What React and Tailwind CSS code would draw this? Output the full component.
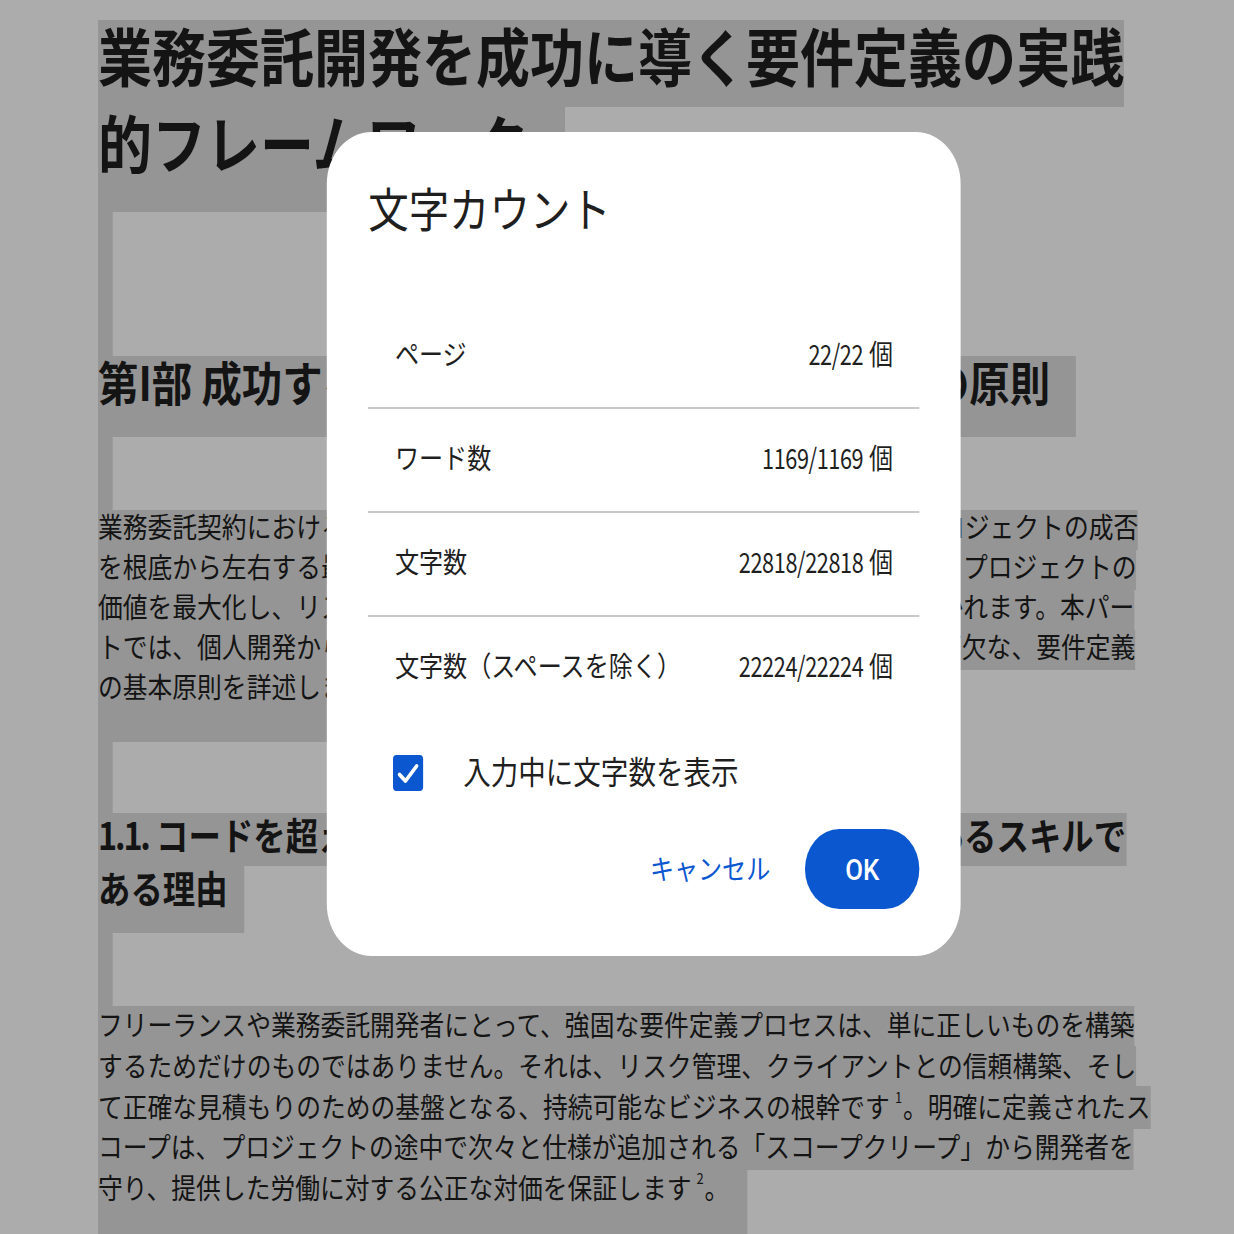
import React from "react";

const rows = [
  { label: "ページ", value: "22/22" },
  { label: "ワード数", value: "1169/1169" },
  { label: "文字数", value: "22818/22818" },
  { label: "文字数（スペースを除く）", value: "22224/22224" },
];

function Strip({ className }) {
  return <div className={"w-[17.4px] bg-[#dddddd] " + className} />;
}

export default function App() {
  return (
    <div className="w-[1234px] h-[1234px] overflow-hidden bg-white">
      <div className="relative w-[1434.9px] h-[1234px] origin-top-left scale-x-[0.86] bg-white text-[#1f1f1f] font-['Noto_Sans_CJK_JP',sans-serif]">
        <main className="pl-[114px] pt-[20px] whitespace-nowrap">
          <h1 className="text-[62.8px] font-bold leading-[68px]">
            <span className="block w-fit h-[87px] bg-[#dddddd]">業務委託開発を成功に導く要件定義の実践</span>
            <span className="block w-fit h-[105px] pr-[42px] bg-[#dddddd]">的フレームワーク</span>
          </h1>
          <Strip className="h-[144px]" />
          <h2 className="w-fit h-[81px] pr-[30px] bg-[#dddddd] text-[47px] font-bold leading-[49px]">
            第I部 成功する業務委託開発のための要件定義の原則
          </h2>
          <Strip className="h-[73px]" />
          <p className="text-[28.8px] leading-[32px]">
            <span className="block w-fit h-[40px] bg-[#dddddd]">業務委託契約における要件定義は、単なる技術仕様の策定作業ではなく、プロジェクトの成否</span>
            <span className="block w-fit h-[40px] bg-[#dddddd]">を根底から左右する最も重要な工程であり、これを適切に実行することによりプロジェクトの</span>
            <span className="block w-fit h-[40px] bg-[#dddddd]">価値を最大化し、リスクを最小限にすることができ、長期的な信頼関係も築かれます。本パー</span>
            <span className="block w-fit h-[40px] bg-[#dddddd]">トでは、個人開発から本格的な受託開発まで、全ての開発者にとって必要不可欠な、要件定義</span>
            <span className="block w-fit h-[72px] pr-[21px] bg-[#dddddd]">の基本原則を詳述します。</span>
          </p>
          <Strip className="h-[71px]" />
          <h3 className="text-[37.7px] font-bold leading-[42px]">
            <span className="block w-fit h-[53px] bg-[#dddddd]">
              <span className="tracking-[-2.5px]">1.1.</span> コードを超えて：要件定義がフリーランスの最も価値あるスキルで
            </span>
            <span className="block w-fit h-[67px] pr-[19px] bg-[#dddddd]">ある理由</span>
          </h3>
          <Strip className="h-[73px]" />
          <p className="text-[28.8px]">
            <span className="block w-fit h-[40px] leading-[36px] bg-[#dddddd]">フリーランスや業務委託開発者にとって、強固な要件定義プロセスは、単に正しいものを構築</span>
            <span className="block w-fit h-[40px] leading-[37px] bg-[#dddddd]">するためだけのものではありません。それは、リスク管理、クライアントとの信頼構築、そし</span>
            <span className="block w-fit h-[43px] leading-[40px] bg-[#dddddd]">
              て正確な見積もりのための基盤となる、持続可能なビジネスの根幹です
              <sup className="ml-[6px] mr-[1px] text-[15px] -top-[15px]">1</sup>
              。明確に定義されたス
            </span>
            <span className="block w-fit h-[41px] leading-[34px] bg-[#dddddd]">コープは、プロジェクトの途中で次々と仕様が追加される「スコープクリープ」から開発者を</span>
            <span className="block w-fit h-[70px] pr-[21px] leading-[33px] bg-[#dddddd]">
              守り、提供した労働に対する公正な対価を保証します
              <sup className="ml-[6px] mr-[1px] text-[15px] -top-[15px]">2</sup>
              。
            </span>
          </p>
        </main>

        <div className="absolute inset-0 bg-[rgba(0,0,0,0.325)]">
          <div
            role="dialog"
            className="absolute left-[380.2px] top-[132px] w-[737.2px] rounded-[52px] bg-white px-[48px] pt-[47px] pb-[47px] text-[#1f1f1f]"
          >
            <h2 className="text-[47px] leading-[56px] whitespace-nowrap">文字カウント</h2>
            <div className="mt-[70px]">
              {rows.map((r, i) => (
                <div
                  key={r.label}
                  className={
                    i < 3
                      ? "h-[104px] border-b-2 border-[#c8c8c8] flex items-center justify-between px-[31px] pb-[6px] text-[28px] leading-[36px]"
                      : "h-[102px] flex items-center justify-between px-[31px] pb-[6px] text-[28px] leading-[36px]"
                  }
                >
                  <span>{r.label}</span>
                  <span className="whitespace-nowrap">
                    <span className="inline-block origin-right scale-x-[0.9] tracking-[-0.5px]">{r.value}</span> 個
                  </span>
                </div>
              ))}
            </div>
            <label className="mt-[36px] h-[36px] flex items-center pl-[29px]">
              <span className="w-[35px] h-[36px] rounded-[4px] bg-[#0b57d0] flex items-center justify-center shrink-0">
                <svg viewBox="0 0 35 36" className="w-[35px] h-[36px]" fill="none">
                  <path d="M7.5 19.5 L14.5 26 L27.5 11" stroke="white" strokeWidth="4" strokeLinecap="round" strokeLinejoin="round" />
                </svg>
              </span>
              <span className="ml-[46.5px] pb-[6px] text-[32px] leading-[36px] whitespace-nowrap">入力中に文字数を表示</span>
            </label>
            <div className="mt-[38px] flex justify-end items-center gap-[16px]">
              <button className="h-[80px] px-[24px] pb-[2px] text-[28px] text-[#0b57d0] whitespace-nowrap">キャンセル</button>
              <button className="h-[80px] w-[133.7px] rounded-full bg-[#0b57d0] text-white text-[30px] font-medium font-['Roboto','Noto_Sans_CJK_JP',sans-serif]">
                OK
              </button>
            </div>
          </div>
        </div>
      </div>
    </div>
  );
}
